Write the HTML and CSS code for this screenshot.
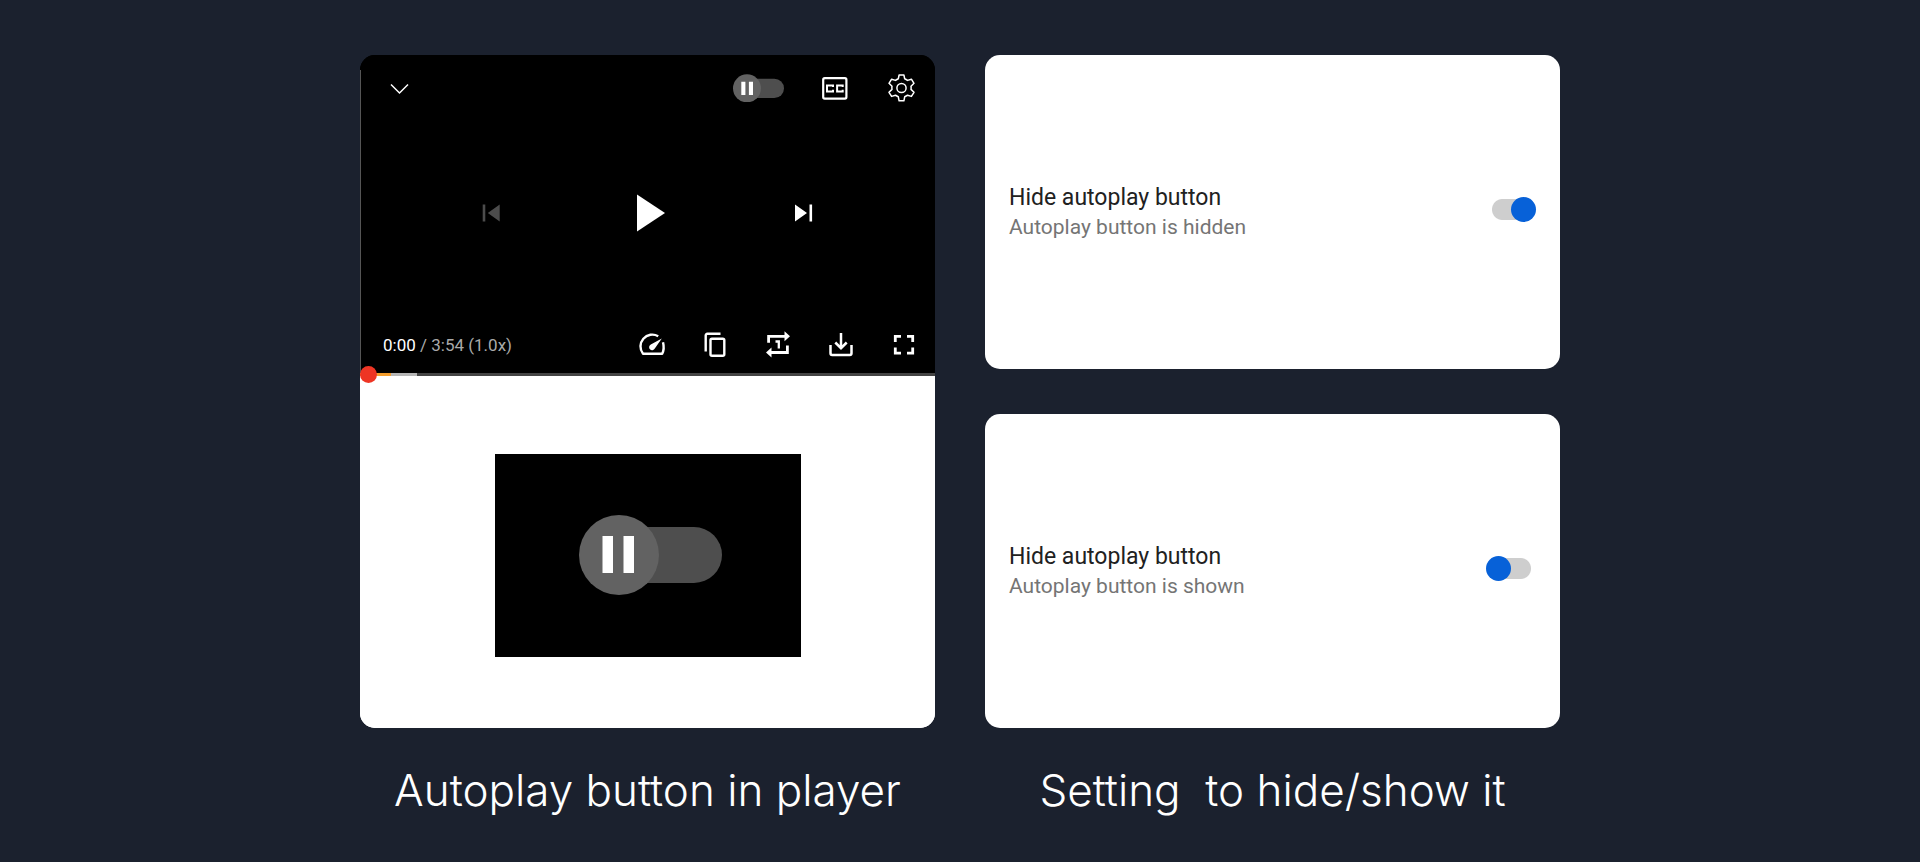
FILE: index.html
```html
<!DOCTYPE html>
<html lang="en">
<head>
<meta charset="utf-8">
<meta name="viewport" content="width=device-width, initial-scale=1">
<title>Hide autoplay button</title>
<link rel="stylesheet" href="styles.css">
</head>
<body>
<main class="page">
  <figure class="column">
    <div class="card player-card">
      <div class="player">
        <div class="top-bar">
          <button class="icon-button collapse" aria-label="Collapse player">
            <svg width="28" height="28" viewBox="0 0 28 28" fill="none" stroke="#fff" stroke-width="1.5"><path d="M5 10.5l8.5 8.5 8.5-8.5"/></svg>
          </button>
          <button class="icon-button" role="switch" aria-checked="false" aria-label="Autoplay">
            <svg width="51" height="28" viewBox="0 0 51 28"><rect x="8" y="4.7" width="43" height="19.4" rx="9.7" fill="#4e4e4e"/><circle cx="14" cy="14.3" r="14" fill="#626262"/><path d="M8.3 7.7h4.1v13.4H8.3zM15.9 7.7H20v13.4h-4.1z" fill="#fff"/></svg>
          </button>
          <button class="icon-button" aria-label="Captions">
            <svg width="28" height="28" viewBox="0 0 28 28" fill="none" stroke="#fff" stroke-width="2.2"><rect x="1.2" y="4.2" width="23.2" height="20.4" rx="1.5"/><path d="M11 13v-1.6H5v6h6v-1.600M20.700 13v-1.600h-5.600v6h5.600v-1.600" stroke-width="2"/></svg>
          </button>
          <button class="icon-button" aria-label="Settings">
            <svg width="28" height="28" viewBox="0 0 28 28" fill="none" stroke="#fff" stroke-width="1.5" stroke-linejoin="round"><path d="M11.1 1h4.8l.8 3.8q1.5.6 2.8 1.6l3.900-1.200 2.600 4.100-3 2.900q.3 2.100 0 3.200l3 2.900-2.600 4.100-3.900-1.200q-1.300 1-2.800 1.600l-.8 4h-4.800l-.8-4q-1.500-.6-2.800-1.600l-3.900 1.200L1 18.300l3-2.900q-.3-1.600 0-3.200L1 9.300l2.600-4.100 3.900 1.200q1.300-1 2.800-1.600z"/><circle cx="13.5" cy="14" r="4.600"/></svg>
          </button>
        </div>
        <div class="transport">
          <button class="icon-button" aria-label="Previous" disabled>
            <svg width="28" height="38" viewBox="0 0 28 38" fill="#4c4c4c"><path d="M4.700 10.500h2.600v17H4.700zM21.700 10.500v17L9.800 19z"/></svg>
          </button>
          <button class="icon-button" aria-label="Play">
            <svg width="40" height="38" viewBox="0 0 40 38" fill="#fff"><path d="M9 .5L37 19 9 37.500z"/></svg>
          </button>
          <button class="icon-button" aria-label="Next">
            <svg width="28" height="38" viewBox="0 0 28 38" fill="#fff"><path d="M5 10.500L17 19 5 27.500zM19.500 10.500h2.600v17h-2.600z"/></svg>
          </button>
        </div>
        <div class="bottom-bar">
          <span class="time"><span class="elapsed">0:00</span> / 3:54 (1.0x)</span>
          <button class="icon-button" aria-label="Playback speed">
            <svg width="28" height="28" viewBox="0 0 28 28" fill="none" stroke="#fff" stroke-width="2.400" stroke-linejoin="round"><path d="M20.200 5.200A11.800 11.800 0 0 0 5 22.700h19.200q2.500-5 .8-11.500"/><path d="M23.800 7.500l-7 10a3 3 0 1 1-4-4z" fill="#fff" stroke="none"/></svg>
          </button>
          <button class="icon-button" aria-label="Copy link">
            <svg width="28" height="28" viewBox="0 0 28 28" fill="none" stroke="#fff" stroke-width="2.400"><path d="M19.500 2.800H6.400q-1.700 0-1.700 1.700v16"/><rect x="9.500" y="7.800" width="13.800" height="17" rx="1.500"/></svg>
          </button>
          <button class="icon-button" aria-label="Repeat once">
            <svg width="28" height="28" viewBox="0 0 28 28" fill="none" stroke="#fff" stroke-width="2.800"><path d="M4.600 11.800V5.300h17M23.400 14.500v7H6"/><path d="M20.500.3l5.500 5-5.500 5zM7.500 16.500l-5.500 5 5.500 5z" fill="#fff" stroke="none"/><path d="M11.500 10.500h3.300v7" stroke-width="2.300"/></svg>
          </button>
          <button class="icon-button" aria-label="Download">
            <svg width="28" height="28" viewBox="0 0 28 28" fill="none" stroke="#fff" stroke-width="2.500"><path d="M14 2v15M8.300 11.500L14 17.200l5.700-5.700M3.500 14v8.300q0 1.700 1.700 1.700h17.600q1.700 0 1.700-1.700V14"/></svg>
          </button>
          <button class="icon-button" aria-label="Full screen">
            <svg width="28" height="28" viewBox="0 0 28 28" fill="none" stroke="#fff" stroke-width="2.800"><path d="M5.300 11V5.300H11M17 5.300h5.700V11M22.700 16.500v5.700H17M11 22.200H5.300v-5.700"/></svg>
          </button>
        </div>
        <input class="seek" type="range" min="0" max="234" value="0" aria-label="Seek">
      </div>
      <div class="preview">
        <div class="preview-frame">
          <svg width="144" height="80" viewBox="0 0 144 80" role="img" aria-label="Autoplay button, paused"><rect x="22" y="12" width="121" height="56" rx="28" fill="#4e4e4e"/><circle cx="40" cy="40" r="40" fill="#626262"/><path d="M23.500 21H34v37H23.500zM44.500 21H55v37H44.500z" fill="#fff"/></svg>
        </div>
      </div>
    </div>
    <figcaption class="caption">Autoplay button in player</figcaption>
  </figure>
  <figure class="column">
    <div class="settings">
      <label class="card setting">
        <span class="setting-text"><span class="setting-title">Hide autoplay button</span><span class="setting-summary">Autoplay button is hidden</span></span>
        <input class="switch" type="checkbox" checked>
      </label>
      <label class="card setting">
        <span class="setting-text"><span class="setting-title">Hide autoplay button</span><span class="setting-summary">Autoplay button is shown</span></span>
        <input class="switch" type="checkbox">
      </label>
    </div>
    <figcaption class="caption">Setting&nbsp; to hide/show it</figcaption>
  </figure>
</main>
</body>
</html>
```
FILE: styles.css
```css
* {
  box-sizing: border-box;
}

body {
  margin: 0;
  background: #1b212e;
  font-family: Roboto, "Liberation Sans", sans-serif;
}

.page {
  display: grid;
  grid-template-columns: 1fr 1fr;
  gap: 50px;
  max-width: 1200px;
  margin: 0 auto;
  padding: 55px 0 32px;
}

.column {
  display: flex;
  flex-direction: column;
  margin: 0;
}

.card {
  border-radius: 15px;
  background: #fff;
  overflow: hidden;
}

.player-card {
  background: linear-gradient(#000 40%, #fff 40%);
}

.player {
  background: linear-gradient(#555, #555) 0 15px / 1px 100% no-repeat #000;
}

.icon-button {
  display: flex;
  padding: 0;
  border: 0;
  background: none;
}

.top-bar {
  display: flex;
  gap: 38px;
  padding: 19px 19px 0 26px;
}

.collapse {
  margin-right: auto;
}

.transport {
  display: flex;
  justify-content: center;
  gap: 122px;
  padding: 92px 0 99px;
}

.bottom-bar {
  display: flex;
  align-items: center;
  gap: 35px;
  padding: 0 17px 14px 23px;
}

.time {
  margin-right: auto;
  color: #aaa;
  font-size: 17px;
  line-height: 28px;
}

.elapsed {
  color: #fff;
}

.seek {
  appearance: none;
  display: block;
  position: relative;
  width: 100%;
  height: 3px;
  margin: 0;
  background: linear-gradient(90deg, #f49d2c 5.4%, #b5b5b5 5.4% 10%, #444 10%);
}

.seek::-webkit-slider-thumb {
  appearance: none;
  width: 17px;
  height: 17px;
  border-radius: 50%;
  background: #ee3524;
}

.preview {
  display: flex;
  justify-content: center;
  padding: 78px 20px 71px;
  background: #fff;
}

.preview-frame {
  display: flex;
  align-items: center;
  justify-content: center;
  padding: 61px 78px 62px 84px;
  background: #000;
}

.settings {
  display: grid;
  grid-template-rows: 1fr 1fr;
  flex: 1;
  gap: 45px;
}

.setting {
  display: flex;
  align-items: center;
  justify-content: space-between;
  padding: 0 24px 6px;
}

.setting-text {
  display: flex;
  flex-direction: column;
  padding-top: 6px;
}

.setting-title {
  color: #212121;
  font-size: 23px;
  line-height: 30px;
}

.setting-summary {
  color: #757575;
  font-size: 21px;
  line-height: 28px;
}

.switch {
  appearance: none;
  display: flex;
  align-items: center;
  width: 50px;
  height: 25px;
  margin: 0;
  background: linear-gradient(#cecece, #cecece) 16px 2px / 18px 21px no-repeat,
    radial-gradient(circle, #cecece 10px, transparent 11px) 6px 2px / 21px 21px no-repeat,
    radial-gradient(circle, #cecece 10px, transparent 11px) 24px 2px / 21px 21px no-repeat;
}

.switch::before {
  content: "";
  width: 25px;
  height: 25px;
  border-radius: 50%;
  background: #0761d8;
}

.switch:checked::before {
  margin-left: auto;
}

.caption {
  padding-top: 32px;
  color: #fff;
  font-family: Inter, sans-serif;
  font-size: 44px;
  font-weight: 300;
  line-height: 60px;
  text-align: center;
}
```
